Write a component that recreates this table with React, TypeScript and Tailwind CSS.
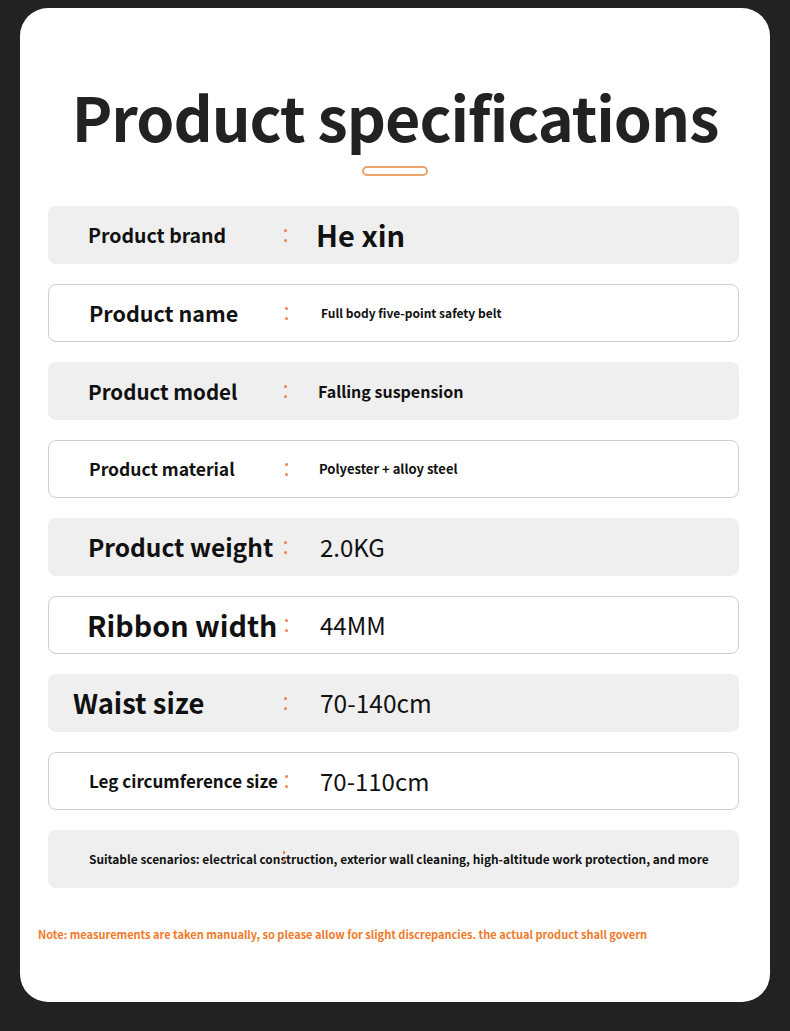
import React from 'react';

type Spec = {
  label: string;
  value: string;
  labelClass: string;
  valueClass: string;
  shaded: boolean;
};

const specs: Spec[] = [
  { label: 'Product brand', value: 'He xin', labelClass: 'pl-[40px] text-[19.5px] font-bold', valueClass: 'pl-[28px] text-[29px] font-bold', shaded: true },
  { label: 'Product name', value: 'Full body five-point safety belt', labelClass: 'pl-[40px] text-[21.5px] font-bold', valueClass: 'pl-[32px] text-[12px] font-bold', shaded: false },
  { label: 'Product model', value: 'Falling suspension', labelClass: 'pl-[40px] text-[20.5px] font-bold', valueClass: 'pl-[30px] text-[16px] font-bold', shaded: true },
  { label: 'Product material', value: 'Polyester + alloy steel', labelClass: 'pl-[40px] text-[17.5px] font-bold', valueClass: 'pl-[30px] text-[13px] font-bold', shaded: false },
  { label: 'Product weight', value: '2.0KG', labelClass: 'pl-[40px] text-[24.5px] font-bold', valueClass: 'pl-[32px] text-[24px] font-normal', shaded: true },
  { label: 'Ribbon width', value: '44MM', labelClass: 'pl-[38px] text-[28.7px] font-bold', valueClass: 'pl-[31px] text-[24px] font-normal', shaded: false },
  { label: 'Waist size', value: '70-140cm', labelClass: 'pl-[25px] text-[27.4px] font-bold', valueClass: 'pl-[32px] text-[24.5px] font-normal', shaded: true },
  { label: 'Leg circumference size', value: '70-110cm', labelClass: 'pl-[40px] text-[17px] font-bold', valueClass: 'pl-[31px] text-[24px] font-normal', shaded: false },
];

function Colon() {
  return (
    <div className="flex w-[6px] flex-col items-center gap-[7px]">
      <span className="h-[3px] w-[3px] rounded-full bg-[#f0824a]" />
      <span className="h-[3px] w-[3px] rounded-full bg-[#f0824a]" />
    </div>
  );
}

function SpecRow({ spec }: { spec: Spec }) {
  return (
    <div
      className={
        spec.shaded
          ? 'flex h-[58px] items-center rounded-lg bg-[#efefef]'
          : 'flex h-[58px] items-center rounded-lg border border-[#cfcfcf] bg-white'
      }
    >
      <div className={'w-[234px] shrink-0 whitespace-nowrap text-[#111] ' + spec.labelClass}>{spec.label}</div>
      <Colon />
      <div className={'whitespace-nowrap text-[#111] ' + spec.valueClass}>{spec.value}</div>
    </div>
  );
}

export default function App() {
  return (
    <div className="min-h-[1031px] bg-[#222222] px-[20px] pt-[8px] pb-[29px] font-['Noto_Sans_CJK_SC','Noto_Sans',sans-serif]">
      <div className="flex h-[994px] flex-col items-center rounded-[28px] bg-white pt-[68px]">
        <h1 className="h-[80px] text-[61px] font-bold leading-[80px] tracking-[-1px] text-[#222]">Product specifications</h1>
        <div className="mt-[10px] h-[10px] w-[66px] rounded-full border-2 border-[#eba46c]" />

        <div className="mt-[30px] flex w-[691px] flex-col gap-5 self-start ml-[28px]">
          {specs.map((s) => (
            <SpecRow key={s.label} spec={s} />
          ))}
          <div className="relative flex h-[58px] items-center rounded-lg bg-[#efefef] pl-[41px]">
            <span className="whitespace-nowrap text-[11.9px] font-bold text-[#111]">
              Suitable scenarios: electrical construction, exterior wall cleaning, high-altitude work protection, and more
            </span>
            <span className="absolute left-[235px] top-[21px] flex flex-col gap-[5px]">
              <span className="h-[3px] w-[2px] bg-[#f0824a]" />
              <span className="h-[3px] w-[2px] bg-[#f0824a]" />
            </span>
          </div>
        </div>

        <p className="mt-[38px] self-start pl-[18px] whitespace-nowrap text-[11px] font-bold text-[#f07a2a]">
          Note: measurements are taken manually, so please allow for slight discrepancies. the actual product shall govern
        </p>
      </div>
    </div>
  );
}
